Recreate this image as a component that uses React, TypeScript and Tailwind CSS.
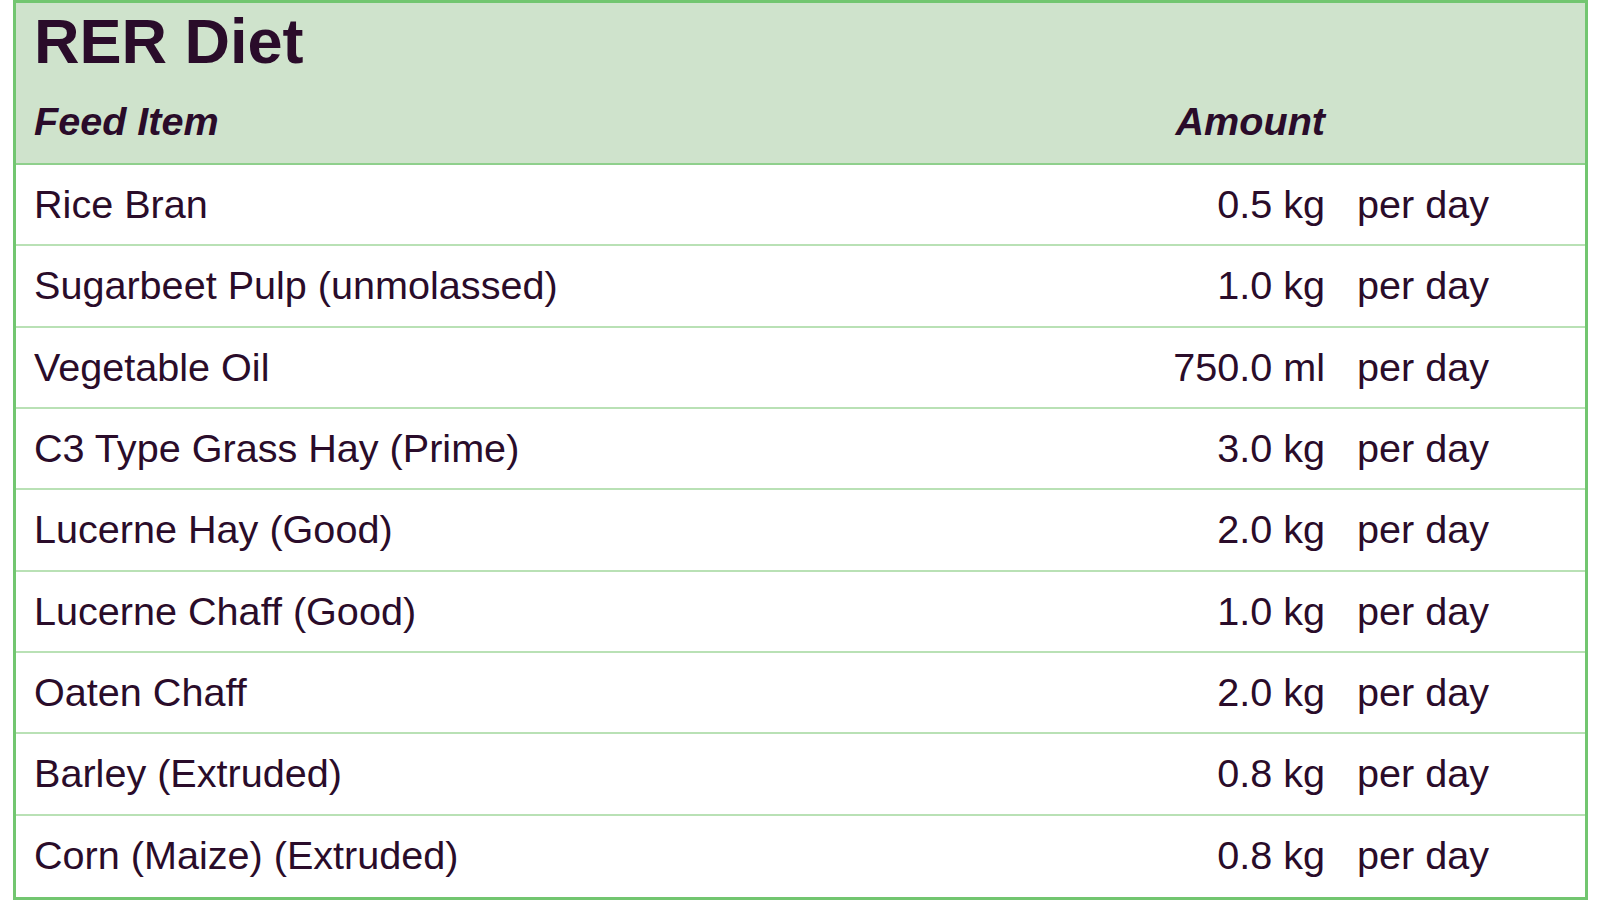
import React from "react";

type Row = { item: string; amount: string };

const rows: Row[] = [
  { item: "Rice Bran", amount: "0.5 kg" },
  { item: "Sugarbeet Pulp (unmolassed)", amount: "1.0 kg" },
  { item: "Vegetable Oil", amount: "750.0 ml" },
  { item: "C3 Type Grass Hay (Prime)", amount: "3.0 kg" },
  { item: "Lucerne Hay (Good)", amount: "2.0 kg" },
  { item: "Lucerne Chaff (Good)", amount: "1.0 kg" },
  { item: "Oaten Chaff", amount: "2.0 kg" },
  { item: "Barley (Extruded)", amount: "0.8 kg" },
  { item: "Corn (Maize) (Extruded)", amount: "0.8 kg" },
];

export default function App() {
  return (
    <div className="h-[900px] w-[1600px] bg-white pl-[13px] font-['Liberation_Sans',Arial,sans-serif] text-[#2a0c2a]">
      <div className="w-[1575px] border-[3px] border-[#72c670]">
        {/* Header */}
        <div className="h-[162px] border-b-2 border-[#8fd08c] bg-[#cfe3cc] pl-[18px]">
          <h1 className="pt-[7px] text-[63px] font-bold leading-[63px]">RER Diet</h1>
          <div className="flex pt-[28px] text-[39.6px] font-bold italic leading-[40px]">
            <span className="flex-1">Feed Item</span>
            <span className="w-[300px] text-right">Amount</span>
            <span className="w-[260px]"></span>
          </div>
        </div>
        {/* Rows */}
        {rows.map((r, i) => (
          <div
            key={i}
            className={
              "flex h-[81.33px] items-center pl-[18px] text-[39.6px] leading-none " +
              (i < rows.length - 1 ? "border-b-2 border-[#b9e1b5]" : "")
            }
          >
            <span className="flex-1">{r.item}</span>
            <span className="w-[300px] text-right">{r.amount}</span>
            <span className="w-[260px] pl-[32px]">per day</span>
          </div>
        ))}
      </div>
    </div>
  );
}
